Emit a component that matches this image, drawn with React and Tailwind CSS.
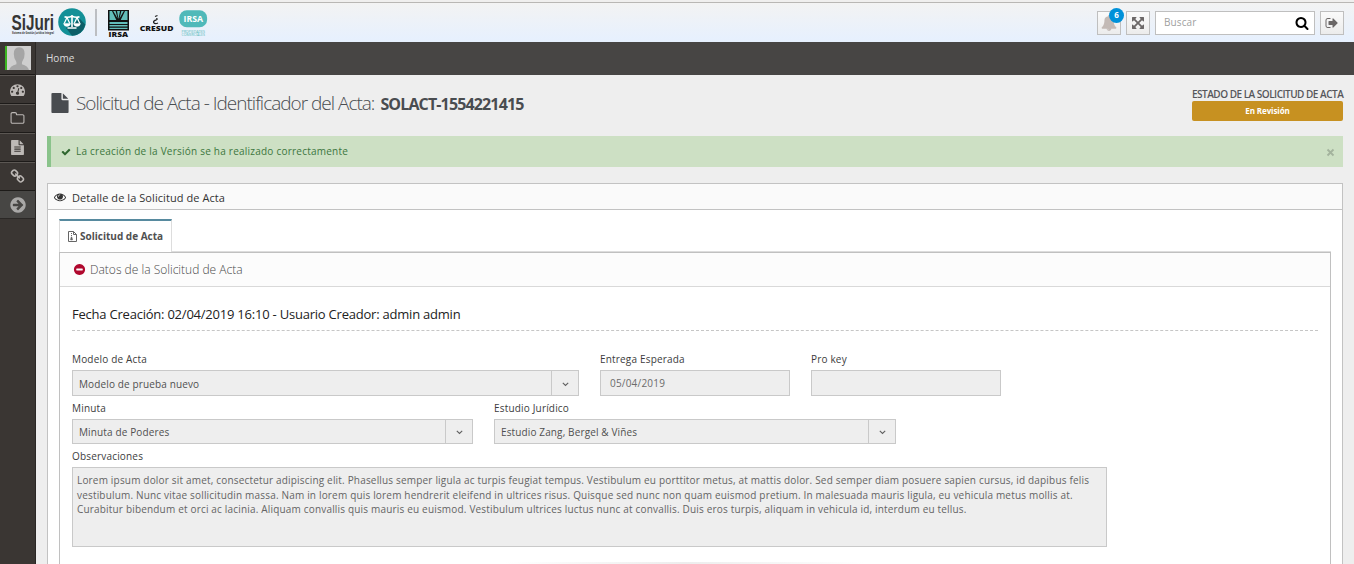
import React from 'react';

const ICONS = {
  dashboard: 'M384 1152q0-53-37.5-90.5t-90.5-37.5-90.5 37.5-37.5 90.5 37.5 90.5 90.5 37.5 90.5-37.5 37.5-90.5zm192-448q0-53-37.5-90.5t-90.5-37.5-90.5 37.5-37.5 90.5 37.5 90.5 90.5 37.5 90.5-37.5 37.5-90.5zm428 481l101-382q6-26-7.5-48.5t-38.5-29.5-48 6.5-30 39.5l-101 382q-60 5-107 43.5t-63 98.5q-20 77 20 146t117 89 146-20 89-117q16-60-6-117t-72-91zm660-33q0-53-37.5-90.5t-90.5-37.5-90.5 37.5-37.5 90.5 37.5 90.5 90.5 37.5 90.5-37.5 37.5-90.5zm-640-640q0-53-37.5-90.5t-90.5-37.5-90.5 37.5-37.5 90.5 37.5 90.5 90.5 37.5 90.5-37.5 37.5-90.5zm448 192q0-53-37.5-90.5t-90.5-37.5-90.5 37.5-37.5 90.5 37.5 90.5 90.5 37.5 90.5-37.5 37.5-90.5zm320 448q0 261-141 483-19 29-54 29h-1402q-35 0-54-29-141-221-141-483 0-182 71-348t191-286 286-191 348-71 348 71 286 191 191 286 71 348z',
  folder: 'M1600 1312v-704q0-40-28-68t-68-28h-704q-40 0-68-28t-28-68v-64q0-40-28-68t-68-28h-320q-40 0-68 28t-28 68v960q0 40 28 68t68 28h1216q40 0 68-28t28-68zm128-704v704q0 92-66 158t-158 66h-1216q-92 0-158-66t-66-158v-960q0-92 66-158t158-66h320q92 0 158 66t66 158v32h672q92 0 158 66t66 158z',
  file: 'M1596 476q14 14 28 36h-472v-472q22 14 36 28zm-476 164h544v1056q0 40-28 68t-68 28h-1344q-40 0-68-28t-28-68v-1600q0-40 28-68t68-28h800v544q0 40 28 68t68 28z',
  fileText: 'M1596 476q14 14 28 36h-472v-472q22 14 36 28zm-476 164h544v1056q0 40-28 68t-68 28h-1344q-40 0-68-28t-28-68v-1600q0-40 28-68t68-28h800v544q0 40 28 68t68 28zm160 736v-64q0-14-9-23t-23-9h-704q-14 0-23 9t-9 23v64q0 14 9 23t23 9h704q14 0 23-9t9-23zm0-256v-64q0-14-9-23t-23-9h-704q-14 0-23 9t-9 23v64q0 14 9 23t23 9h704q14 0 23-9t9-23zm0-256v-64q0-14-9-23t-23-9h-704q-14 0-23 9t-9 23v64q0 14 9 23t23 9h704q14 0 23-9t9-23z',
  link: 'M1520 1216q0-40-28-68l-208-208q-28-28-68-28-42 0-72 32 3 3 19 18.5t21.5 21.5 15 19 13 25.5 3.5 27.5q0 40-28 68t-68 28q-15 0-27.5-3.5t-25.5-13-19-15-21.5-21.5-18.5-19q-33 31-33 73 0 40 28 68l206 207q27 27 68 27 40 0 68-26l147-146q28-28 28-67zm-703-705q0-40-28-68l-206-207q-28-28-68-28-39 0-68 27l-147 146q-28 28-28 67 0 40 28 68l208 208q27 27 68 27 42 0 72-31-3-3-19-18.5t-21.5-21.5-15-19-13-25.5-3.5-27.5q0-40 28-68t68-28q15 0 27.5 3.5t25.5 13 19 15 21.5 21.5 18.5 19q33-31 33-73zm895 705q0 120-85 203l-147 146q-83 83-203 83-121 0-204-85l-206-207q-83-83-83-203 0-123 88-209l-88-88q-86 88-208 88-120 0-204-84l-208-208q-84-84-84-204t85-203l147-146q83-83 203-83 121 0 204 85l206 207q83 83 83 203 0 123-88 209l88 88q86-88 208-88 120 0 204 84l208 208q84 84 84 204z',
  arrowCircle: 'M1413 896q0-27-18-45l-91-91-362-362q-18-18-45-18t-45 18l-91 91q-18 18-18 45t18 45l189 189h-502q-26 0-45 19t-19 45v128q0 26 19 45t45 19h502l-189 189q-19 19-19 45t19 45l91 91q18 18 45 18t45-18l362-362 91-91q18-18 18-45zm251 0q0 209-103 385.5t-279.5 279.5-385.5 103-385.5-103-279.5-279.5-103-385.5 103-385.5 279.5-279.5 385.5-103 385.5 103 279.5 279.5 103 385.5z',
  minusCircle: 'M1344 960v-128q0-26-19-45t-45-19h-768q-26 0-45 19t-19 45v128q0 26 19 45t45 19h768q26 0 45-19t19-45zm320-64q0 209-103 385.5t-279.5 279.5-385.5 103-385.5-103-279.5-279.5-103-385.5 103-385.5 279.5-279.5 385.5-103 385.5 103 279.5 279.5 103 385.5z',
  eye: 'M1664 960q-152-236-381-353 61 104 61 225 0 185-131.5 316.5t-316.5 131.5-316.5-131.5-131.5-316.5q0-121 61-225-229 117-381 353 133 205 333.5 326.5t434.5 121.5 434.5-121.5 333.5-326.5zm-720-384q0-20-14-34t-34-14q-125 0-214.5 89.5t-89.5 214.5q0 20 14 34t34 14 34-14 14-34q0-86 61-147t147-61q20 0 34-14t14-34zm848 384q0 34-20 69-140 230-376.5 368.5t-499.5 138.5-499.5-139-376.5-368q-20-35-20-69t20-69q140-229 376.5-368t499.5-139 499.5 139 376.5 368q20 35 20 69z',
  check: 'M1671 566q0 40-28 68l-724 724-136 136q-28 28-68 28t-68-28l-136-136-362-362q-28-28-28-68t28-68l136-136q28-28 68-28t68 28l294 295 656-657q28-28 68-28t68 28l136 136q28 28 28 68z',
  signOut: 'M704 1440q0 4 1 20t.5 26.5-3 23.5-10 19.5-20.5 6.5h-320q-119 0-203.5-84.5t-84.5-203.5v-704q0-119 84.5-203.5t203.5-84.5h320q13 0 22.5 9.5t9.5 22.5q0 4 1 20t.5 26.5-3 23.5-10 19.5-20.5 6.5h-320q-66 0-113 47t-47 113v704q0 66 47 113t113 47h312l11.5 1 11.5 3 8 5.5 7 9 2 13.5zm928-544q0 26-19 45l-544 544q-19 19-45 19t-45-19-19-45v-288h-448q-26 0-45-19t-19-45v-384q0-26 19-45t45-19h448v-288q0-26 19-45t45-19 45 19l544 544q19 19 19 45z',
  expand: 'M1411 541l-355 355 355 355 144-144q29-31 70-14 39 17 39 59v448q0 26-19 45t-45 19h-448q-42 0-59-40-17-39 14-69l144-144-355-355-355 355 144 144q31 30 14 69-17 40-59 40h-448q-26 0-45-19t-19-45v-448q0-42 40-59 39-17 69 14l144 144 355-355-355-355-144 144q-19 19-45 19-12 0-24-5-40-17-40-59v-448q0-26 19-45t45-19h448q42 0 59 40 17 39-14 69l-144 144 355 355 355-355-144-144q-31-30-14-69 17-40 59-40h448q26 0 45 19t19 45v448q0 42-39 59-13 5-25 5-26 0-45-19z',
  search: 'M1216 832q0-185-131.5-316.5t-316.5-131.5-316.5 131.5-131.5 316.5 131.5 316.5 316.5 131.5 316.5-131.5 131.5-316.5zm512 832q0 52-38 90t-90 38q-54 0-90-38l-343-342q-179 124-399 124-143 0-273.5-55.5t-225-150-150-225-55.5-273.5 55.5-273.5 150-225 225-150 273.5-55.5 273.5 55.5 225 150 150 225 55.5 273.5q0 220-124 399l343 343q37 37 37 90z',
  bell: 'M912 1696q0-16-16-16-59 0-101.5-42.5t-42.5-101.5q0-16-16-16t-16 16q0 73 51.5 124.5t124.5 51.5q16 0 16-16zm816-288q0 52-38 90t-90 38h-448q0 106-75 181t-181 75-181-75-75-181h-448q-52 0-90-38t-38-90q50-42 91-88t85-119.5 74.5-158.5 50-206 19.5-260q0-152 117-282.5t307-158.5q-8-19-8-39 0-40 28-68t68-28 68 28 28 68q0 20-8 39 190 28 307 158.5t117 282.5q0 139 19.5 260t50 206 74.5 158.5 85 119.5 91 88z',
};

function Icon({ name, className }) {
  return (
    <svg viewBox="0 0 1792 1792" fill="currentColor" className={`block shrink-0 ${className}`}>
      <path d={ICONS[name]} />
    </svg>
  );
}

function Logos() {
  return (
    <svg className="block shrink-0" width="212" height="39" viewBox="0 3 212 39" fontFamily="Open Sans, sans-serif">
      <g fill="#353535">
        <text x="11.5" y="29.5" fontSize="22" fontFamily="Liberation Sans, sans-serif" fontWeight="700" textLength="42.5" lengthAdjust="spacingAndGlyphs">SiJuri</text>
        <text x="12" y="33.6" fontSize="3.6" fontWeight="700" textLength="42" lengthAdjust="spacingAndGlyphs">Sistema de Gestión Jurídica Integral</text>
      </g>
      <circle cx="72" cy="22" r="13.8" fill="#139097" />
      <path d="M80 19L85.3 24.5A13.8 13.8 0 0 1 72 35.8L66 28z" fill="#0d5f68" />
      <g fill="none" stroke="#fff" strokeWidth="1.2">
        <path d="M64.5 16.8Q68 18 72 16.3Q76 18 79.5 16.8M72 15V27M67.5 28H76.5" strokeWidth="1.6" />
        <path d="M67 17.5L64.2 23.5M67 17.5L69.8 23.5M77 17.5L74.2 23.5M77 17.5L79.8 23.5" />
        <path d="M63.5 23.5H70.5Q70 26.4 67 26.4T63.5 23.5zM73.5 23.5H80.5Q80 26.4 77 26.4T73.5 23.5z" fill="#fff" strokeWidth=".4" />
      </g>
      <rect x="95" y="9" width="2" height="27" fill="#bcbec2" />
      <rect x="108" y="10" width="21" height="20.5" fill="#111" />
      <g fill="#62bdb9">
        <path d="M109.5 11H112L116.3 20H109.5zM113.2 11H115.6L117.6 18.5zM117 11H120L118.5 19zM121.4 11H123.8L119.5 18.5zM125 11H127.5V20H120.7z" />
        <path d="M109.5 22H127.5V24H109.5zM109.5 25H127.5V26.6H109.5zM109.5 27.7H127.5V29H109.5z" />
      </g>
      <text x="108.6" y="37" fontSize="7" fontWeight="800" fill="#111" textLength="19.5" lengthAdjust="spacingAndGlyphs">IRSA</text>
      <path d="M155 16.5L157.5 15.5M156.8 18L157 20M156.5 20Q153 20.5 153.7 22.7Q155 24.4 158 23" fill="none" stroke="#222" strokeWidth="1.3" />
      <text x="139.8" y="30.7" fontSize="7.2" fontWeight="800" fill="#111" textLength="33.6" lengthAdjust="spacingAndGlyphs">CRESUD</text>
      <rect x="179.3" y="10.2" width="27.8" height="17" rx="7.5" fill="#50b9b9" />
      <text x="183.6" y="21.8" fontSize="8" fontWeight="700" fill="#fff" textLength="19.5" lengthAdjust="spacingAndGlyphs">IRSA</text>
      <g fill="#54b9ba" fontSize="3.4">
        <text x="181.5" y="33" textLength="23.5" lengthAdjust="spacingAndGlyphs">PROPIEDADES</text>
        <text x="181.5" y="36.3" textLength="23.5" lengthAdjust="spacingAndGlyphs">COMERCIALES</text>
      </g>
    </svg>
  );
}

function ToolButton({ children }) {
  return (
    <button className="relative flex h-6 w-6 items-center justify-center border border-[#bfbfbf] bg-linear-to-b from-[#fafafa] to-[#ececec] text-[#6b6767]">
      {children}
    </button>
  );
}

function TopBar() {
  return (
    <header className="flex h-[39px] shrink-0 items-center justify-between bg-linear-to-b from-[#f3f3f3] to-[#e6f0fe] pr-[10px]">
      <Logos />
      <div className="flex items-center gap-[5px]">
        <ToolButton>
          <Icon name="bell" className="mt-px h-4 w-4 text-[#c3bab6]" />
          <span className="absolute -top-1 left-[11px] flex h-[15px] w-[15px] items-center justify-center rounded-full bg-[#0091d9] text-[8px] font-bold text-white">6</span>
        </ToolButton>
        <ToolButton><Icon name="expand" className="h-[14px] w-[14px]" /></ToolButton>
        <div className="flex h-6 w-40 items-center justify-between border border-[#bfbfbf] bg-white pr-[5px] pl-2">
          <span className="text-[10px] tracking-[0.1px] text-[#a0a0a0]">Buscar</span>
          <Icon name="search" className="h-[14px] w-[14px]" />
        </div>
        <ToolButton><Icon name="signOut" className="h-[14px] w-[14px]" /></ToolButton>
      </div>
    </header>
  );
}

function Sidebar() {
  const row = 'flex items-center justify-center border-t border-t-[#5b5753] border-b border-b-[#1d1b19] text-[#bdb9b6]';
  return (
    <nav className="flex w-9 shrink-0 flex-col border-r border-[#2a2725] bg-[#3a3633]">
      <div className="flex h-[33px] items-center border-b border-[#1d1b19] pl-[5px]">
        <svg width="26" height="24" viewBox="0 0 26 24" className="block">
          <rect width="26" height="24" fill="#cecece" />
          <path d="M4 24Q5 20 11.5 18.2Q11.8 16 10.4 14Q9 12 8.8 8Q8.6 1.2 14.2 1.2T19.6 8Q19.4 12 18 14Q16.6 16 16.9 18.2Q23 20 24 24z" fill="#a5a5a5" />
          <rect width="2" height="24" fill="#3cb521" />
        </svg>
      </div>
      <a className={`${row} h-[29px]`}><Icon name="dashboard" className="h-[15px] w-[15px]" /></a>
      <a className={`${row} h-[29px]`}><Icon name="folder" className="h-[15px] w-[15px]" /></a>
      <a className={`${row} h-[29px]`}><Icon name="fileText" className="h-[15px] w-[15px]" /></a>
      <a className={`${row} h-[29px]`}><Icon name="link" className="h-[15px] w-[15px]" /></a>
      <a className="flex h-[28px] items-center justify-center border-b border-[#2b2826] bg-[#474644] text-[#a9a8a7]"><Icon name="arrowCircle" className="h-[18px] w-[18px]" /></a>
    </nav>
  );
}

function Field({ label, width, children }) {
  return (
    <div className={`flex flex-col ${width}`}>
      <label className="mb-1 h-[14px] text-[10px] leading-[14px] tracking-[0.18px] text-[#3c3c3c]">{label}</label>
      {children}
    </div>
  );
}

function Select({ value, height }) {
  return (
    <div className={`flex border border-[#c9c9c9] bg-[#eeeeee] ${height}`}>
      <span className="flex flex-1 items-center pt-[2px] pl-[6px] text-[10px] tracking-[0.13px] text-[#505050]">{value}</span>
      <span className="flex w-[27px] items-center justify-center border-l border-[#c9c9c9]">
        <svg width="7" height="5" viewBox="0 0 7 5" className="mt-[2px] block">
          <path d="M.8 .8L3.5 3.5L6.2 .8" fill="none" stroke="#606060" strokeWidth="1.1" />
        </svg>
      </span>
    </div>
  );
}

function Input({ value }) {
  return <div className="flex h-[26px] items-center border border-[#c9c9c9] bg-[#eeeeee] pl-[9px] text-[10px] tracking-[0.2px] text-[#6b6b6b]">{value}</div>;
}

function TabIcon() {
  return (
    <svg width="9" height="11" viewBox="0 0 9 11" className="block shrink-0">
      <path d="M.5 .5H5.5L8.5 3.5V10.5H.5zM5.5 .5V3.5H8.5" fill="none" stroke="#666" />
      <path d="M3 1v1h1v1H3v1h1v1H3M2.2 8.8L3 5.8H4L4.9 8.8Q3.5 9.8 2.2 8.8z" fill="#666" />
    </svg>
  );
}

function RequestPanel() {
  return (
    <section className="flex flex-1 flex-col border border-b-0 border-[#c0c0c0] bg-white">
      <div className="flex h-[34px] shrink-0 items-center border-b border-[#d9d9d9] bg-[#fcfcfc] pl-[13px] text-[12px] font-light text-[#4a4a4a]">
        <Icon name="minusCircle" className="mr-[4px] h-[13px] w-[13px] text-[#b0082e]" />
        <span>Datos de la Solicitud de Acta</span>
      </div>
      <div className="flex flex-col px-3 pt-[18px]">
        <h3 className="flex h-[26px] items-center border-b border-dashed border-[#c6c6c6] pb-[5px] text-[13px] tracking-[-0.22px] text-[#222222]">
          Fecha Creación: 02/04/2019 16:10 - Usuario Creador: admin admin
        </h3>
        <div className="mt-[21px] flex gap-[21px]">
          <Field label="Modelo de Acta" width="w-[507px]"><Select value="Modelo de prueba nuevo" height="h-[26px]" /></Field>
          <Field label="Entrega Esperada" width="w-[190px]"><Input value="05/04/2019" /></Field>
          <Field label="Pro key" width="w-[190px]"><Input value="" /></Field>
        </div>
        <div className="mt-[5px] flex gap-[21px]">
          <Field label="Minuta" width="w-[401px]"><Select value="Minuta de Poderes" height="h-[25px]" /></Field>
          <Field label="Estudio Jurídico" width="w-[402px]"><Select value="Estudio Zang, Bergel & Viñes" height="h-[25px]" /></Field>
        </div>
        <div className="mt-[5px]">
          <Field label="Observaciones" width="w-[1035px]">
            <div className="h-[80px] border border-[#c9c9c9] bg-[#eeeeee] pt-[5px] pl-1 text-[10px] leading-[14.5px] tracking-[0.18px] whitespace-nowrap text-[#646464]">
              <p>Lorem ipsum dolor sit amet, consectetur adipiscing elit. Phasellus semper ligula ac turpis feugiat tempus. Vestibulum eu porttitor metus, at mattis dolor. Sed semper diam posuere sapien cursus, id dapibus felis</p>
              <p>vestibulum. Nunc vitae sollicitudin massa. Nam in lorem quis lorem hendrerit eleifend in ultrices risus. Quisque sed nunc non quam euismod pretium. In malesuada mauris ligula, eu vehicula metus mollis at.</p>
              <p>Curabitur bibendum et orci ac lacinia. Aliquam convallis quis mauris eu euismod. Vestibulum ultrices luctus nunc at convallis. Duis eros turpis, aliquam in vehicula id, interdum eu tellus.</p>
            </div>
          </Field>
        </div>
      </div>
      <div className="mt-[15px] ml-[445px] h-[2px] w-[360px] shrink-0 bg-linear-to-r from-white via-[#ededed] to-white" />
    </section>
  );
}

export default function App() {
  return (
    <div className="flex h-[564px] w-[1354px] flex-col overflow-hidden bg-[#eeeeee] font-['Open_Sans',sans-serif]">
      <div className="h-[3px] shrink-0 border-b border-[#b9b7b4] bg-[#f0efee]" />
      <TopBar />
      <div className="flex min-h-0 flex-1">
        <Sidebar />
        <div className="flex min-w-0 flex-1 flex-col">
          <div className="flex h-[33px] shrink-0 items-center bg-[#474544] pl-[10px] text-[10px] text-[#dcdcdc]">Home</div>
          <main className="flex min-h-0 flex-1 flex-col px-[11px]">
            <div className="flex h-[61px] shrink-0 justify-between">
              <h1 className="flex h-[56px] items-center pl-[3px] whitespace-nowrap text-[#494c50]">
                <Icon name="file" className="mr-[6px] h-5 w-5" />
                <span className="text-[19px] font-light tracking-[-1px]">Solicitud de Acta - Identificador del Acta:</span>
                <span className="ml-[6px] pt-[2px] text-[16px] font-bold tracking-[-0.86px]">SOLACT-1554221415</span>
              </h1>
              <div className="flex w-[151px] flex-col pt-[13px]">
                <span className="h-[13px] text-[10px] leading-[13px] font-semibold tracking-[-0.5px] whitespace-nowrap text-[#55565a]">ESTADO DE LA SOLICITUD DE ACTA</span>
                <span className="flex h-5 items-center justify-center rounded-[2px] bg-[#c79121] text-[8px] font-bold tracking-[-0.1px] text-white">En Revisión</span>
              </div>
            </div>
            <div className="flex h-[31px] shrink-0 items-center border-l-4 border-[#8ac38b] bg-[#cde0c4] pr-2 pl-[10px] text-[10px] text-[#3c763d]">
              <Icon name="check" className="mr-[5px] h-[10px] w-[10px] text-[#2f662f]" />
              <span className="flex-1 tracking-[0.23px]">La creación de la Versión se ha realizado correctamente</span>
              <svg width="9" height="9" viewBox="0 0 9 9" className="mt-[2px] block">
                <path d="M1.5 1.5L7.5 7.5M7.5 1.5L1.5 7.5" stroke="#a3b39d" strokeWidth="1.8" />
              </svg>
            </div>
            <section className="mt-4 flex min-h-0 flex-1 flex-col border border-b-0 border-[#c2c2c2] bg-white">
              <div className="flex h-[26px] shrink-0 items-center border-b border-[#c2c2c2] bg-[#fafafa] pl-[6px] text-[11px] text-[#333333]">
                <Icon name="eye" className="mr-[6px] h-3 w-3" />
                <span className="pt-[3px] tracking-[0.07px]">Detalle de la Solicitud de Acta</span>
              </div>
              <div className="flex min-h-0 flex-1 flex-col px-[11px] pt-[9px]">
                <div className="flex h-[33px] shrink-0">
                  <div className="flex w-[113px] items-center gap-[3px] border-x border-t-2 border-x-[#dddddd] border-t-[#578a9f] bg-white pl-2 text-[10px] font-bold text-[#505050]">
                    <TabIcon />
                    <span>Solicitud de Acta</span>
                  </div>
                  <div className="flex-1 border-b border-[#dddddd]" />
                </div>
                <RequestPanel />
              </div>
            </section>
          </main>
        </div>
      </div>
    </div>
  );
}
